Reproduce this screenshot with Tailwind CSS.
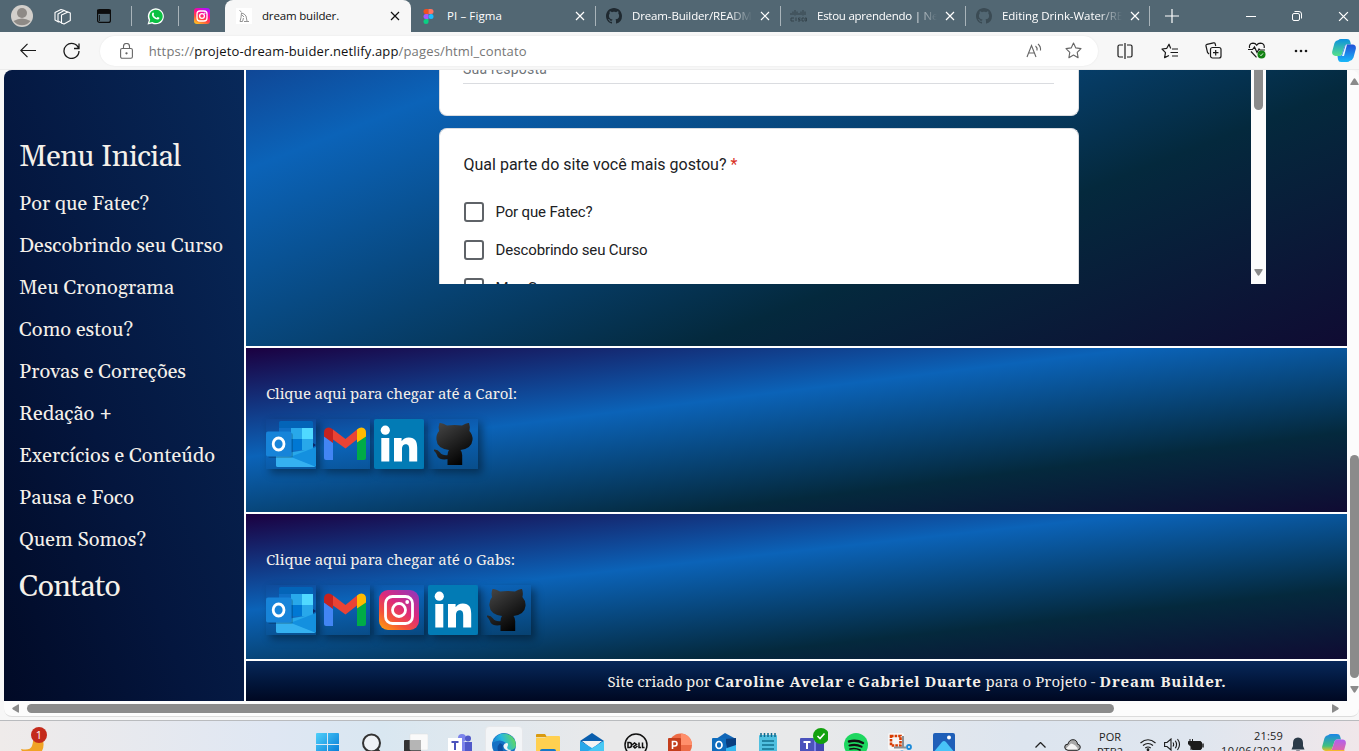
<!DOCTYPE html>
<html lang="pt-BR">
<head>
<meta charset="utf-8">
<title>dream builder.</title>
<script src="https://cdn.jsdelivr.net/npm/@tailwindcss/browser@4"></script>
</head>
<body class="w-[1359px] h-[751px] overflow-hidden flex flex-col bg-[#f7f7f7] font-['Open_Sans','Noto_Sans',sans-serif]">

<svg width="0" height="0" class="absolute">
  <defs>
    <linearGradient id="gIg" x1="0.1" y1="1" x2="0.8" y2="0"><stop offset="0" stop-color="#ff9a10"/><stop offset=".3" stop-color="#f4513a"/><stop offset=".6" stop-color="#dd2a7b"/><stop offset="1" stop-color="#9a35b5"/></linearGradient>
    <linearGradient id="gIg2" x1="0.2" y1="1" x2="0.7" y2="0"><stop offset="0" stop-color="#ffc020"/><stop offset=".35" stop-color="#ff4a40"/><stop offset=".65" stop-color="#ff0a90"/><stop offset="1" stop-color="#b010ff"/></linearGradient>
    <linearGradient id="gCat" gradientUnits="userSpaceOnUse" x1="10" y1="5" x2="36" y2="44"><stop offset="0" stop-color="#444"/><stop offset="1" stop-color="#000"/></linearGradient>
    <linearGradient id="gEdge" x1="0" y1=".6" x2="1" y2=".3"><stop offset="0" stop-color="#1479d0"/><stop offset=".45" stop-color="#28b8e0"/><stop offset="1" stop-color="#68dc50"/></linearGradient>
    <linearGradient id="gWin" x1="0" y1="0" x2="1" y2="1"><stop offset="0" stop-color="#4fd0fa"/><stop offset="1" stop-color="#0074d4"/></linearGradient>
    <linearGradient id="gCoA" x1="0" y1="0" x2="0" y2="1"><stop offset="0" stop-color="#0a90e0"/><stop offset="1" stop-color="#58e08a"/></linearGradient>
    <linearGradient id="gCoB" x1="0" y1="0" x2="0" y2="1"><stop offset="0" stop-color="#2050d8"/><stop offset="1" stop-color="#18b8f8"/></linearGradient>
    <linearGradient id="gCoC" x1="0" y1="0" x2="0" y2="1"><stop offset="0" stop-color="#1a86e8"/><stop offset=".7" stop-color="#40c080"/><stop offset="1" stop-color="#f0c020"/></linearGradient>
    <linearGradient id="gCoD" x1="0" y1="0" x2="0" y2="1"><stop offset="0" stop-color="#b060f0"/><stop offset="1" stop-color="#f86a80"/></linearGradient>
    <symbol id="mark" viewBox="0 0 16 16"><path d="M8 0C3.58 0 0 3.58 0 8c0 3.54 2.29 6.53 5.47 7.59.4.07.55-.17.55-.38 0-.19-.01-.82-.01-1.49-2.01.37-2.53-.49-2.69-.94-.09-.23-.48-.94-.82-1.13-.28-.15-.68-.52-.01-.53.63-.01 1.08.58 1.23.82.72 1.21 1.87.87 2.33.66.07-.52.28-.87.51-1.07-1.78-.2-3.64-.89-3.64-3.95 0-.87.31-1.59.82-2.15-.08-.2-.36-1.02.08-2.12 0 0 .67-.21 2.2.82.64-.18 1.32-.27 2-.27.68 0 1.36.09 2 .27 1.53-1.04 2.2-.82 2.2-.82.44 1.1.16 1.92.08 2.12.51.56.82 1.27.82 2.15 0 3.07-1.87 3.75-3.65 3.95.29.25.54.73.54 1.48 0 1.07-.01 1.93-.01 2.2 0 .21.15.46.55.38A8.013 8.013 0 0016 8c0-4.42-3.58-8-8-8z"/></symbol>
    <symbol id="x" viewBox="0 0 10 10"><path d="M1 1l8 8M9 1l-8 8" stroke="currentColor" stroke-width="1.2" fill="none"/></symbol>
    <symbol id="outlook" viewBox="0 0 50 50">
      <rect x="13" y="2" width="34" height="20" rx="1.5" fill="#0364b8"/><rect x="13" y="9" width="12" height="11" fill="#0f6fc6"/><rect x="25" y="9" width="11" height="11" fill="#28a8ea"/><rect x="36" y="9" width="11" height="11" fill="#50d9ff"/>
      <rect x="13" y="20" width="12" height="11" fill="#064a8c"/><rect x="25" y="20" width="11" height="11" fill="#0078d4"/><rect x="36" y="20" width="11" height="11" fill="#28a8ea"/>
      <rect x="25" y="31" width="13" height="9" fill="#0f6fc6"/><path d="M47 24l3 2-3 2z" fill="#0a2767"/>
      <path d="M10 36l40-7v17q0 2-2 2H12q-2 0-2-2z" fill="#28a8ea"/><path d="M24 38l26-10v17q0 2-1.500 3z" fill="#1490df"/><path d="M10 37l15 1 24 9.500-1 .5H12q-2 0-2-2z" fill="#35b1f0"/>
      <rect x="2" y="14" width="25" height="25" rx="2" fill="#000" opacity=".18"/><rect x="0" y="12.500" width="25.500" height="25" rx="2" fill="#1784d9"/>
      <ellipse cx="12.600" cy="25" rx="5.400" ry="6" fill="none" stroke="#fff" stroke-width="2.800"/>
    </symbol>
    <symbol id="gmail" viewBox="0 0 50 50">
      <path d="M4 17l9 6.500V41H6q-2 0-2-2z" fill="#4285f4"/><path d="M37 23.500L46 17v22q0 2-2 2h-7z" fill="#00ac47"/>
      <path d="M13 13.500v10.600L4 17.500v-4q0-4.500 4.500-5 2 0 4.500 2z" fill="#c5221f"/><path d="M13 10.500L25.500 20 37 10.500V20.500L25.500 29.500 13 20.500z" fill="#ea4335"/>
      <path d="M37 23.500V10.500q2-2 4.500-2Q46 9 46 13.500v4z" fill="#ffba00"/>
    </symbol>
    <symbol id="linkedin" viewBox="0 0 50 50"><rect width="50" height="50" rx="2" fill="#027bb5"/><circle cx="11.300" cy="11.200" r="4.600" fill="#fff"/><path d="M7.300 19h8v23.500h-8zM20 19h7.600v3.300c1.400-2.500 4-3.900 7.200-3.900 6.500 0 8.400 4.200 8.400 10.300v13.800h-8V30.400c0-3-.6-5.200-3.400-5.200s-3.800 2.200-3.800 5.200v12.100h-8z" fill="#fff"/></symbol>
    <symbol id="insta" viewBox="0 0 50 50"><rect x="5" y="5" width="40" height="40" rx="9" fill="url(#gIg)"/><rect x="11.500" y="11.500" width="27" height="27" rx="7" fill="none" stroke="#fff" stroke-width="2.800"/><circle cx="25" cy="25" r="6.500" fill="none" stroke="#fff" stroke-width="2.800"/><circle cx="33.200" cy="17" r="1.900" fill="#fff"/></symbol>
    <symbol id="cat" viewBox="0 0 50 50" fill="url(#gCat)"><path d="M11.500 4q3-.5 7.500 2.600 7.500-1.400 15 0Q38.500 3.500 41 4q1.500 4 .4 8 3.600 4 3.100 9-.8 8.500-12 10 1.700 2 1.700 5v10H19.500V36q0-3 1.500-5Q9 29.500 8.400 20.500q-.4-5 2.700-8.500-1.200-4 .4-8z"/><path d="M6 30.500q3.500-.5 6 3 2.500 3.500 8.500 2.500v4q-8.500 1.500-11-2.500Q8 33 6 32z"/></symbol>
  </defs>
</svg>

<!-- Tab strip -->
<header class="h-8 shrink-0 bg-[#526773] flex items-center text-[11.5px] text-white">
  <div class="w-11 flex justify-center"><svg width="22" height="22" viewBox="0 0 22 22"><circle cx="11" cy="11" r="11" fill="#d2cfcb"/><circle cx="11" cy="8" r="5" fill="#8e8a86"/><path d="M2.500 16q8.500-5 17 0A10.500 10.500 0 0 1 2.500 16z" fill="#8e8a86"/></svg></div>
  <div class="w-9 flex justify-center"><svg width="17" height="17" viewBox="0 0 17 17" fill="#526773" stroke="#fff" stroke-width="1.100" stroke-linejoin="round"><path d="M1 4.500l6-3 3.500 1v8l-6 3.500L1 12z"/><path d="M4 6l6-3.500 3.500 1.500v8L8 15l-4-2z"/><path d="M7.500 7L14 4l2.300 1v7.500L10 16l-2.500-1z"/></svg></div>
  <div class="w-[51px] pl-[17px]"><svg width="14" height="14" viewBox="0 0 14 14"><rect x=".6" y=".6" width="12.800" height="12.800" rx="2" fill="none" stroke="#0c0c0c" stroke-width="1.200"/><path d="M0 1h14v3.500H0zM2.500 6v6" fill="#0c0c0c" stroke="#0c0c0c" stroke-width=".8"/></svg></div>
  <div class="w-px h-5 bg-[#a9b4ba]"></div>
  <div class="w-[46px] flex justify-center"><svg width="17" height="17" viewBox="0 0 17 17"><path d="M.5 16.500l1.300-4.300A8 8 0 1 1 5 15.400z" fill="#fff"/><path d="M2.300 14.700l.9-3A6.700 6.700 0 1 1 5.400 14z" fill="#0cc143"/><path d="M5.800 4.500q.8-.3 1.300 1.300.1.500-.6 1.200Q7.500 9 9.700 9.900q.7-1 1-1 1.800.6 1.800 1-.2 1.700-2.200 1.700Q6 10.700 4.900 6.900q-.1-1.600.9-2.400z" fill="#fff"/></svg></div>
  <div class="w-px h-5 bg-[#a9b4ba]"></div>
  <div class="w-[46px] pl-[15px]"><svg width="16" height="16" viewBox="0 0 16 16"><rect width="16" height="16" rx="3" fill="url(#gIg2)"/><rect x="3" y="3" width="10" height="10" rx="3" fill="none" stroke="#fff" stroke-width="1.300"/><circle cx="8" cy="8" r="2.400" fill="none" stroke="#fff" stroke-width="1.300"/><circle cx="10.800" cy="5.200" r=".7" fill="#fff"/></svg></div>

  <div class="w-[186px] h-8 bg-[#f7f7f7] rounded-t-lg flex items-center text-[#111] pl-[11px]">
    <svg width="16" height="16" viewBox="0 0 16 16"><rect width="16" height="16" fill="#fff"/><path d="M3.500 2.500l2 1.500M5.500 5q3 .5 4.500 3l1 5M5.500 5L5 9.500 4 13.500h2.500L7.500 10M8 13.500h5M6 7l2 2" stroke="#888" stroke-width=".9" fill="none"/></svg>
    <span class="ml-[10px] whitespace-nowrap" data-fit="77">dream builder.</span>
    <svg width="10" height="10" class="ml-auto mr-[11px]"><use href="#x"/></svg>
  </div>
  <div class="w-[184px] h-8 flex items-center pl-3">
    <svg width="11" height="15" viewBox="0 0 10 15"><path d="M2.500 0H5v5H2.500a2.500 2.500 0 0 1 0-5z" fill="#f24e1e"/><path d="M5 0h2.500a2.500 2.500 0 0 1 0 5H5z" fill="#ff7262"/><path d="M2.500 5H5v5H2.500a2.500 2.500 0 0 1 0-5z" fill="#a259ff"/><circle cx="7.500" cy="7.500" r="2.500" fill="#1abcfe"/><path d="M2.500 10H5v2.500A2.500 2.500 0 1 1 2.500 10z" fill="#0acf83"/></svg>
    <span class="ml-[13px] whitespace-nowrap" data-fit="55">PI – Figma</span>
    <svg width="10" height="10" class="ml-auto mr-[10px]"><use href="#x"/></svg>
  </div>
  <div class="w-px h-5 bg-[#a9b4ba]"></div>
  <div class="w-[184px] h-8 flex items-center pl-[10px]">
    <svg width="16" height="16" fill="#1f2930"><use href="#mark"/></svg>
    <div class="ml-[10px] w-[120px] overflow-hidden whitespace-nowrap [mask-image:linear-gradient(to_right,black_80%,transparent)]"><span data-fit="126">Dream-Builder/README</span></div>
    <svg width="10" height="10" class="ml-auto mr-[10px]"><use href="#x"/></svg>
  </div>
  <div class="w-px h-5 bg-[#a9b4ba]"></div>
  <div class="w-[184px] h-8 flex items-center pl-[9px]">
    <svg width="17" height="14" viewBox="0 0 17 14" fill="none" stroke="#35444d" stroke-width="1"><path d="M1 4v2M3 2.500V6M5 1v5.500M7 2.500V6M9 4v2M11 2.500V6M13 1v5.500M15 2.500V6"/><path d="M4 9H1v3h3M6 8.500V12M10.500 9H8.500v1.500h1.500V12H8M14 9h-2v3h2M15 9h1.500v3H15z"/></svg>
    <div class="ml-[10px] w-[120px] overflow-hidden whitespace-nowrap [mask-image:linear-gradient(to_right,black_80%,transparent)]"><span data-fit="125">Estou aprendendo | Net</span></div>
    <svg width="10" height="10" class="ml-auto mr-[10px]"><use href="#x"/></svg>
  </div>
  <div class="w-px h-5 bg-[#a9b4ba]"></div>
  <div class="w-[183px] h-8 flex items-center pl-[10px]">
    <svg width="16" height="16" fill="#3b4b54"><use href="#mark"/></svg>
    <div class="ml-[10px] w-[120px] overflow-hidden whitespace-nowrap [mask-image:linear-gradient(to_right,black_80%,transparent)]"><span data-fit="121">Editing Drink-Water/RE</span></div>
    <svg width="10" height="10" class="ml-auto mr-[9px]"><use href="#x"/></svg>
  </div>
  <div class="w-px h-5 bg-[#a9b4ba]"></div>
  <svg class="ml-[15px]" width="14" height="14" viewBox="0 0 14 14"><path d="M7 0v14M0 7h14" stroke="#fff" stroke-width="1.200"/></svg>
  <div class="ml-auto w-[46px] flex justify-center"><div class="w-[10px] h-px bg-white"></div></div>
  <div class="w-[46px] flex justify-center"><svg width="10" height="10" viewBox="0 0 10 10" fill="none" stroke="#fff"><rect x=".5" y="2.500" width="7" height="7" rx="1.500"/><path d="M2.500.5H7q2.500 0 2.500 2.500v4.500"/></svg></div>
  <div class="w-[39px] pl-[18px]"><svg width="11" height="11"><use href="#x"/></svg></div>
</header>

<!-- Address bar -->
<div class="h-[38px] shrink-0 flex items-center border-b border-[#ececec] text-[#1a1a1a]">
  <div class="w-14 flex justify-center"><svg width="16" height="15" viewBox="0 0 16 15" fill="none" stroke="currentColor" stroke-width="1.200"><path d="M16 7.500H1M7.500.8L.8 7.500l6.700 6.700"/></svg></div>
  <div class="w-8 flex justify-center"><svg width="17" height="17" viewBox="0 0 17 17" fill="none" stroke="currentColor" stroke-width="1.300"><path d="M15.600 6.500A7.500 7.500 0 1 0 16 9M16 1.500v5h-5"/></svg></div>
  <div class="ml-3 w-[998px] shrink-0 h-[30px] bg-white rounded-full flex items-center pl-5 shadow-[0_0_2px_rgba(0,0,0,0.08)]">
    <svg width="13" height="16" viewBox="0 0 13 16" fill="none" stroke="#666" stroke-width="1.100"><rect x=".6" y="5.500" width="11.800" height="9.700" rx="1.500"/><path d="M3.500 5.500V3.500a3 3 0 0 1 6 0v2"/><circle cx="6.500" cy="10.300" r=".6" fill="#666"/></svg>
    <div class="ml-4 pt-[2px] text-[13px] text-[#767676] whitespace-nowrap" data-fit="378">https://<span class="text-[#111]">projeto-dream-buider.netlify.app</span>/pages/html_contato</div>
    <svg class="ml-auto" width="17" height="16" viewBox="0 0 17 16" fill="none" stroke="#666" stroke-width="1.100"><path d="M1 14L5.500 2.500 10 14M2.500 10h6M9.500 3q2 1.500 1.500 4.500M12 1q3 2.500 2.500 6.500"/></svg>
    <svg class="ml-[22px] mr-4" width="17" height="17" viewBox="0 0 17 17" fill="none" stroke="#666" stroke-width="1.100" stroke-linejoin="round"><path d="M8.500 1l2.300 4.900 5.200.7-3.800 3.700.9 5.400-4.600-2.600-4.600 2.600.9-5.400L1 6.600l5.200-.7z"/></svg>
  </div>
  <div class="ml-[5px] w-[45px] flex justify-center"><svg width="16" height="16" viewBox="0 0 16 16" fill="none" stroke="currentColor" stroke-width="1.200"><path d="M6 2H2.500Q1 2 1 3.500v9Q1 14 2.500 14H6M10 2h3.500Q15 2 15 3.500v9q0 1.500-1.500 1.500H10M8 0v16"/></svg></div>
  <div class="w-11 flex justify-center"><svg width="17" height="16" viewBox="0 0 17 16" fill="none" stroke="currentColor" stroke-width="1.200" stroke-linejoin="round"><path d="M9.700 5.500L8 1.200 5.800 5.300 1 6l3.500 3.600-.9 5L8 12.500M11 6h6M9.500 9.500H17M11 13h6"/></svg></div>
  <div class="w-11 flex justify-center"><svg width="17" height="17" viewBox="0 0 17 17" fill="none" stroke="currentColor" stroke-width="1.200"><path d="M4 12L2.500 10.500 1 4q-.3-1.300 1-1.700L8.500.8q1.300-.3 1.700 1L10.700 4"/><rect x="5.500" y="5.500" width="10.500" height="10.500" rx="2"/><path d="M10.700 8v5.500M8 10.700h5.500"/></svg></div>
  <div class="w-11 flex justify-center"><svg width="18" height="17" viewBox="0 0 18 17" fill="none" stroke="currentColor" stroke-width="1.200"><path d="M1.500 6Q.7 1.500 5 1.200q2.500 0 3.700 2 1.200-2 3.800-2Q17 1.500 16.200 6M3 9.500l5.500 5.800M0 7.500h4.500L6.500 5l2.500 5.500L11 7l1 1h5"/><circle cx="13.500" cy="12.500" r="4" fill="#128212" stroke="none"/><path d="M12 12.700l1 1 2-2.300" stroke="#fff" stroke-width=".9"/></svg></div>
  <div class="w-11 flex justify-center"><svg width="14" height="4" viewBox="0 0 14 4" fill="currentColor"><circle cx="2" cy="2" r="1.300"/><circle cx="7" cy="2" r="1.300"/><circle cx="12" cy="2" r="1.300"/></svg></div>
  <div class="w-9 shrink-0 pl-[9px]"><svg width="24" height="23" viewBox="0 0 24 23"><path d="M6.500 1Q7 0 9 0h6q2.500 0 3 2l1 3.500h-4q-2 0-2.500 2L10 15q-.7 2-2.500 2h-4Q-.5 16.500.2 12.500L2.500 4q.8-2.500 4-3z" fill="url(#gCoA)"/><path d="M17.500 22q-.5 1-2.500 1H9q-2.500 0-3-2.500L5.500 17h2Q9.500 17 10 15l2.500-7.500q.5-2 2.500-2h5.500q4 .5 3.300 4.500L21.500 18.500Q20.700 21 17.500 22z" fill="url(#gCoB)"/><path d="M10 17l3.500-10.500Q14 5.500 15 5.500l-3 11.500z" fill="#e8f6ff"/></svg></div>
</div>

<!-- Page -->
<div class="h-[631px] shrink-0 flex pl-1">
  <nav class="w-60 shrink-0 rounded-tl-lg pt-[61px] pl-[15px] text-[#f4f0ea] text-[20px] font-[Gelasio,'Liberation_Serif',serif] bg-[linear-gradient(70deg,#010a26_0%,#04163e_40%,#08295a_100%)]">
    <div class="h-[52px] flex items-center text-[30px]"><span class="whitespace-nowrap" data-fit="162">Menu Inicial</span></div>
    <div class="h-[42px] flex items-center"><span class="whitespace-nowrap" data-fit="130">Por que Fatec?</span></div>
    <div class="h-[42px] flex items-center"><span class="whitespace-nowrap" data-fit="204">Descobrindo seu Curso</span></div>
    <div class="h-[42px] flex items-center"><span class="whitespace-nowrap" data-fit="155">Meu Cronograma</span></div>
    <div class="h-[42px] flex items-center"><span class="whitespace-nowrap" data-fit="114">Como estou?</span></div>
    <div class="h-[42px] flex items-center"><span class="whitespace-nowrap" data-fit="167">Provas e Correções</span></div>
    <div class="h-[42px] flex items-center"><span class="whitespace-nowrap" data-fit="93">Redação +</span></div>
    <div class="h-[42px] flex items-center"><span class="whitespace-nowrap" data-fit="196">Exercícios e Conteúdo</span></div>
    <div class="h-[42px] flex items-center"><span class="whitespace-nowrap" data-fit="115">Pausa e Foco</span></div>
    <div class="h-[42px] flex items-center"><span class="whitespace-nowrap" data-fit="127">Quem Somos?</span></div>
    <div class="h-[52px] flex items-center text-[30px]"><span class="whitespace-nowrap" data-fit="101">Contato</span></div>
  </nav>

  <main class="w-[1103px] shrink-0 overflow-hidden border-l-2 border-white bg-white flex flex-col gap-[2px] text-[#f4f0ea] text-[15px] font-['Droid_Serif','Noto_Serif',Gelasio,'DejaVu_Serif_Condensed',serif]">
    <section class="w-[1342px] h-[276px] shrink-0 overflow-hidden flex flex-col justify-end">
      <div class="h-[528px] shrink-0 flex flex-col justify-end pb-[62px] bg-[linear-gradient(to_bottom_right,#1b0040,#0b63b8_33.3%,#04293d_66.6%,#14002f)]">
        <div class="h-[214px] shrink-0 pl-[193px] flex overflow-hidden font-[Roboto,sans-serif] text-[#202124]">
          <div class="w-[640px] flex flex-col">
            <div class="h-[46px] shrink-0 bg-white rounded-b-lg border-x border-b border-[#dadce0] px-[23px] flex flex-col overflow-hidden">
              <div class="h-[14px] shrink-0 border-b border-[#dadce0] w-[591px] flex items-end pb-[6px] leading-4 text-[14px] text-[#70757a]"><span class="whitespace-nowrap" data-fit="84">Sua resposta</span></div>
            </div>
            <div class="mt-3 h-[156px] bg-white rounded-t-lg border-x border-t border-[#dadce0] px-[23.5px] pt-6 overflow-hidden">
              <div class="h-6 leading-6 text-[16px]"><span data-fit="263">Qual parte do site você mais gostou?</span><span class="text-[#d93025] ml-1">*</span></div>
              <div class="mt-4 h-[38px] flex items-center"><div class="size-5 border-2 border-[#5f6368] rounded-[3px]"></div><span class="ml-3 text-[15px]" data-fit="97">Por que Fatec?</span></div>
              <div class="h-[38px] flex items-center"><div class="size-5 border-2 border-[#5f6368] rounded-[3px]"></div><span class="ml-3 text-[15px]" data-fit="152">Descobrindo seu Curso</span></div>
              <div class="h-[38px] flex items-center"><div class="size-5 border-2 border-[#5f6368] rounded-[3px]"></div><span class="ml-3 text-[15px]" data-fit="112">Meu Cronograma</span></div>
            </div>
          </div>
          <div class="ml-[172px] w-[15px] bg-[#fcfcfc] flex flex-col items-center">
            <div class="w-[9px] h-10 bg-[#8b8b8b] rounded-b-full"></div>
            <svg class="mt-auto mb-2" width="9" height="7" viewBox="0 0 9 7"><path d="M1 0h7q1 0 .6 1L5.500 6q-1 1.500-2 0L.4 1Q0 0 1 0z" fill="#8b8b8b"/></svg>
          </div>
        </div>
      </div>
    </section>

    <section class="w-[1342px] h-[164px] shrink-0 pl-5 pt-9 bg-[linear-gradient(to_bottom_right,#1b0040,#0b63b8_33.3%,#04293d_66.6%,#14002f)]">
      <p class="h-5 leading-[19px] whitespace-nowrap"><span data-fit="251">Clique aqui para chegar até a Carol:</span></p>
      <div class="mt-[15px] flex gap-1">
        <svg class="size-[50px] shadow-[4px_4px_8px_rgba(0,0,0,0.4)]"><use href="#outlook"/></svg>
        <svg class="size-[50px] shadow-[4px_4px_8px_rgba(0,0,0,0.4)]"><use href="#gmail"/></svg>
        <svg class="size-[50px] shadow-[4px_4px_8px_rgba(0,0,0,0.4)]"><use href="#linkedin"/></svg>
        <svg class="size-[50px] shadow-[4px_4px_8px_rgba(0,0,0,0.4)]"><use href="#cat"/></svg>
      </div>
    </section>

    <section class="w-[1342px] h-[145px] shrink-0 pl-5 pt-9 bg-[linear-gradient(to_bottom_right,#1b0040,#0b63b8_33.3%,#04293d_66.6%,#14002f)]">
      <p class="h-5 leading-[19px] whitespace-nowrap"><span data-fit="249">Clique aqui para chegar até o Gabs:</span></p>
      <div class="mt-[15px] flex gap-1">
        <svg class="size-[50px] shadow-[4px_4px_8px_rgba(0,0,0,0.4)]"><use href="#outlook"/></svg>
        <svg class="size-[50px] shadow-[4px_4px_8px_rgba(0,0,0,0.4)]"><use href="#gmail"/></svg>
        <svg class="size-[50px] shadow-[4px_4px_8px_rgba(0,0,0,0.4)]"><use href="#insta"/></svg>
        <svg class="size-[50px] shadow-[4px_4px_8px_rgba(0,0,0,0.4)]"><use href="#linkedin"/></svg>
        <svg class="-ml-px size-[50px] shadow-[4px_4px_8px_rgba(0,0,0,0.4)]"><use href="#cat"/></svg>
      </div>
    </section>

    <footer class="w-[1342px] h-10 shrink-0 flex items-center justify-center bg-linear-to-b from-[#08285a] to-[#000822]">
      <p class="whitespace-pre"><span data-fit="107">Site criado por </span><b data-fit="129">Caroline Avelar</b><span data-fit="15"> e </span><b data-fit="123">Gabriel Duarte</b><span data-fit="118"> para o Projeto - </span><b data-fit="127">Dream Builder.</b></p>
    </footer>
  </main>

  <div class="w-3 shrink-0 bg-[#fcfcfc] rounded-tr-lg flex flex-col items-end pt-2">
    <svg width="9" height="7" viewBox="0 0 9 7"><path d="M1 7h7q1 0 .6-1L5.500 1q-1-1.500-2 0L.4 6Q0 7 1 7z" fill="#8b8b8b"/></svg>
    <div class="mt-[370px] w-[9px] h-[223px] rounded-full bg-[#8b8b8b]"></div>
    <svg class="mt-2" width="9" height="7" viewBox="0 0 9 7"><path d="M1 0h7q1 0 .6 1L5.500 6q-1 1.500-2 0L.4 1Q0 0 1 0z" fill="#8b8b8b"/></svg>
  </div>
</div>

<div class="h-4 shrink-0 ml-1 pl-2 flex items-center bg-[#fcfcfc] border-b border-[#dcdcdc] rounded-b-lg">
  <svg width="7" height="9" viewBox="0 0 7 9"><path d="M7 1v7q0 1-1 .6L1 5.500q-1.500-1 0-2L6 .4Q7 0 7 1z" fill="#8b8b8b"/></svg>
  <div class="ml-2 w-[1087px] h-[9px] rounded-full bg-[#8b8b8b]"></div>
  <svg class="ml-auto mr-5" width="7" height="9" viewBox="0 0 7 9"><path d="M0 1v7q0 1 1 .6l5-3.100q1.500-1 0-2L1 .4Q0 0 0 1z" fill="#8b8b8b"/></svg>
</div>

<!-- Taskbar -->
<div class="mt-[3px] h-12 shrink-0 border-t border-[#b9bbbe] flex items-center bg-[linear-gradient(to_right,#efebea,#dfe7f3_20%,#d9e7f1_28%,#e9e9ea_45%,#e8e9ea_60%,#dde5ef_75%,#dfe6ef_88%,#f0e7ea)]">
  <div class="w-[305.5px] pl-[21px] pb-1"><svg width="27" height="32" viewBox="0 0 27 32"><path d="M0 22q9 2 11-3 1-3 1-5L22 13q2 8-3 14T4 28q-3-3-4-6z" fill="#f0a326"/><circle cx="18" cy="8" r="8" fill="#c42b1c"/><text x="18" y="12" font-size="11" fill="#fff" text-anchor="middle">1</text></svg></div>
  <div class="w-11 flex justify-center"><svg width="23" height="23" viewBox="0 0 23 23" fill="url(#gWin)"><path d="M1 0h10v11H0V1q0-1 1-1zM12 0h10q1 0 1 1v10H12zM0 12h11v11H0zM12 12h11v11H12z"/></svg></div>
  <div class="w-11 flex justify-center"><svg width="22" height="24" viewBox="0 0 22 24" fill="none" stroke="#333"><circle cx="10.500" cy="10" r="8.500" stroke-width="2" fill="#eef2f6"/><path d="M16 16l4.500 6" stroke-width="2.800"/></svg></div>
  <div class="w-11 flex justify-center"><svg width="24" height="24" viewBox="0 0 24 24"><rect y="7" width="17" height="16" rx="1" fill="#333"/><rect x="6" y="1" width="18" height="16" rx="1" fill="#fafafa" stroke="#ddd" stroke-width=".5"/><path d="M6 7h11v10H6z" fill="#b5b5b5"/></svg></div>
  <div class="w-11 flex justify-center"><svg width="26" height="24" viewBox="0 0 26 24"><circle cx="15" cy="5" r="4" fill="#7b83eb"/><circle cx="21" cy="5.500" r="3" fill="#5059c9"/><path d="M10 9h9v15h-9z" fill="#7b83eb"/><path d="M18 9h7v15h-7z" fill="#5059c9"/><rect x="1" y="5" width="14" height="19" fill="#fff"/><path d="M4.500 9h7M8 9v8" stroke="#4b53bc" stroke-width="2"/></svg></div>
  <div class="w-11 flex justify-center"><div class="w-[38px] h-[38px] rounded bg-[#f3f5f7] border border-[#e6e8eb] flex items-center justify-center"><svg width="24" height="24" viewBox="0 0 24 24"><circle cx="12" cy="12" r="12" fill="#1570c4"/><path d="M.3 10A12 12 0 0 1 24 12q-.5 5-6 5-4-.5-3.500-2.500Q16 12 14 10 8 5 .3 10z" fill="url(#gEdge)"/><path d="M11 12q-2 8 6 9.500Q12 24.500 8 21q-5-6 0-11z" fill="#0c4fa0"/><path d="M14 17q-3-2-2.500-4.500T14.500 10t1 3.500 4 3.500q-2 2-5.500 0z" fill="#f3f5f7"/></svg></div></div>
  <div class="w-11 flex justify-center"><svg width="24" height="24" viewBox="0 0 24 24"><path d="M0 2q0-1 1-1h8l2 3H0z" fill="#d99a10"/><path d="M0 4.500h9L11.500 3H23q1 0 1 1v20H0z" fill="#ffd050"/><path d="M4 18q0-2 2-2h12q2 0 2 2v6H4z" fill="#1478c8"/></svg></div>
  <div class="w-11 flex justify-center"><svg width="24" height="24" viewBox="0 0 24 24"><path d="M0 8L12 0l12 8-12 8z" fill="#0a5ead"/><path d="M2 8h20L12 16z" fill="#f3f3f3"/><path d="M0 8l12 7 12-7v16H0z" fill="#28a8ea"/><path d="M24 8L8 18l10 6h6z" fill="#48c8f4"/></svg></div>
  <div class="w-11 flex justify-center"><svg width="24" height="24" viewBox="0 0 24 24" fill="none" stroke="#111" stroke-width="1.500"><circle cx="12" cy="12" r="11"/><path d="M4 9.500v5h1.500q2 0 2-2.500t-2-2.500zM8 12l2.500-2 2 1.500-3 2L11 15l2.500-2M15 9.500v5h2M18.500 9.500v5h2"/></svg></div>
  <div class="w-11 flex justify-center"><svg width="24" height="24" viewBox="0 0 24 24"><circle cx="12.500" cy="12" r="11.500" fill="#ed6c47"/><path d="M13 .5A11.500 11.500 0 0 1 24 12H13z" fill="#ff8f6b"/><rect y="5" width="13" height="14" rx="1" fill="#c43e1c"/><path d="M4.500 16V8.500h2.300q2.200 0 2.200 2.200T6.800 13H4.500" stroke="#fff" stroke-width="1.600" fill="none"/></svg></div>
  <div class="w-11 flex justify-center"><svg width="24" height="24" viewBox="0 0 24 24"><path d="M4 6l9-6 11 6v18H4z" fill="#1066b8"/><path d="M13 6l11-1v9l-8 4z" fill="#0a3f80"/><path d="M6 18l18-6v12H6z" fill="#35b8f0"/><rect y="5" width="14" height="14" rx="1" fill="#0f6cbd"/><ellipse cx="7" cy="12" rx="3" ry="3.500" stroke="#fff" stroke-width="1.700" fill="none"/></svg></div>
  <div class="w-11 flex justify-center"><svg width="18" height="24" viewBox="0 0 18 24"><rect y="2" width="18" height="22" rx="1" fill="#50c0e0"/><path d="M2 0v4M5.500 0v4M9 0v4M12.500 0v4M16 0v4" stroke="#10688c" stroke-width="1.500"/><path d="M3 8h12M3 12h12M3 16h12" stroke="#12708f" stroke-width="1.500"/></svg></div>
  <div class="w-11 flex justify-center"><svg width="32" height="34" viewBox="0 0 32 34"><path d="M9 12h19v17H9z" fill="#7b83eb"/><path d="M20 14h8v15h-8z" fill="#4048b0"/><rect x="4" y="10" width="14" height="16" rx="1" fill="#4b53bc"/><path d="M7.500 14h7M11 14v7" stroke="#fff" stroke-width="2"/><path d="M8 23h18v5H8z" fill="#38c8f0"/><circle cx="25" cy="8" r="8" fill="#13a10e"/><path d="M21.500 8l2.500 2.500 4.500-5" stroke="#fff" stroke-width="1.600" fill="none"/></svg></div>
  <div class="w-11 flex justify-center"><svg width="24" height="24" viewBox="0 0 24 24" fill="none" stroke="#111" stroke-linecap="round"><circle cx="12" cy="12" r="12" fill="#1ed760" stroke="none"/><path d="M5 8.500q7.500-2 14 1.500" stroke-width="2.500"/><path d="M5.500 12.500q6.500-1.800 12 1.200" stroke-width="2.100"/><path d="M6 16q5.500-1.400 10 1" stroke-width="1.700"/></svg></div>
  <div class="w-11 flex justify-center"><svg width="24" height="24" viewBox="0 0 24 24"><rect width="16" height="17" rx="2" fill="#f6f6f6"/><rect x="3" y="3" width="9.500" height="9.500" fill="none" stroke="#d83b01" stroke-width="2.600" stroke-dasharray="2.600 1"/><path d="M15 3v12M6 14.500h12" stroke="#8a8f94" stroke-width="2"/><circle cx="21" cy="14" r="2" fill="none" stroke="#1b8ad8" stroke-width="1.800"/><circle cx="14" cy="21" r="2.500" fill="none" stroke="#1b8ad8" stroke-width="1.800"/></svg></div>
  <div class="w-11 flex justify-center"><svg width="22" height="24" viewBox="0 0 22 24"><rect width="22" height="24" rx="2" fill="#1f5fb8"/><path d="M0 20L9 9q2-2 4 0l9 11v4H0z" fill="#48c4f8"/><circle cx="16" cy="4.500" r="2" fill="#fff"/></svg></div>

  <div class="ml-auto w-8 flex justify-center"><svg width="11" height="6" viewBox="0 0 11 6"><path d="M.5 5.500l5-5 5 5" stroke="#222" stroke-width="1.300" fill="none"/></svg></div>
  <div class="w-8 flex justify-center"><svg width="17" height="12" viewBox="0 0 17 12"><path d="M4 11.300Q.7 11 .7 8T4 5.200Q5 .7 9 .7t4.500 4.500q2.800.3 2.800 3t-3 3.100z" fill="#a8a8a8" stroke="#222"/><path d="M2 9.500l5-5q5 1 7 6H4z" fill="#f4f4f4"/></svg></div>
  <div class="w-11 pb-[2px] text-center text-[11px] leading-[15px] text-[#1c1c1c]"><div>POR</div><div>PTB2</div></div>
  <div class="ml-1 w-6 flex justify-center"><svg width="16" height="12" viewBox="0 0 16 12" fill="none" stroke="#1c1c1c" stroke-width="1.200"><path d="M.5 4q7.500-6.500 15 0M3 6.500q5-4 10 0M5.300 9q2.700-2 5.400 0"/><circle cx="8" cy="10.700" r=".8" fill="#1c1c1c"/></svg></div>
  <div class="w-6 flex justify-center"><svg width="17" height="13" viewBox="0 0 17 13" fill="none" stroke="#1c1c1c" stroke-width="1.100"><path d="M.6 4.500H3L7 1v11L3 8.500H.6zM9 4.500q1.300 2 0 4M11.300 2.800q2.500 3.700 0 7.400M13.500 1q4 5.500 0 11"/></svg></div>
  <div class="w-6 flex justify-center"><svg width="16" height="13" viewBox="0 0 16 13"><rect x="3.500" y="3.500" width="10" height="8" rx="1.500" fill="#1c1c1c" stroke="#1c1c1c"/><path d="M15 5.500v4" stroke="#1c1c1c" stroke-width="1.500"/><path d="M.5 3.500h5v2.500l-2 2H2.500l-2-2zM2 1v2M4.500 1v2M3 8v4" fill="#1c1c1c" stroke="#1c1c1c"/></svg></div>
  <div class="w-[75px] pb-[3px] flex flex-col items-end text-[11px] leading-[15px] text-[#1c1c1c] whitespace-nowrap"><span data-fit="29">21:59</span><span data-fit="62">10/06/2024</span></div>
  <div class="ml-2 w-[14px]"><svg width="14" height="16" viewBox="0 0 14 16"><path d="M7 .5q5 .3 5 5.500v3l1.500 3.500H.5L2 9V6Q2 .8 7 .5zM5 13.500h4q-2 2.500-4 0z" fill="#2b3a48"/></svg></div>
  <div class="w-[54px] pl-1 flex justify-center"><svg width="24" height="22" viewBox="0 0 24 22"><path d="M6.500 1Q7 0 9 0h6q2.500 0 3 2l1 3.500h-4q-2 0-2.500 2L10 15q-.7 2-2.500 2h-4Q-.5 16.500.2 12.500L2.500 4q.8-2.500 4-3z" fill="url(#gCoC)"/><path d="M17.500 22H9q-2.500 0-3-2.500L5.500 17h2Q9.500 17 10 15l2.500-7.500q.5-2 2.500-2h5.500q4 .5 3.300 4.500L21.500 18.500z" fill="url(#gCoD)"/><rect x="5" y="16" width="18" height="6" rx="2" fill="#f5b82e"/></svg></div>
</div>

<script>
  /* Tracks each label out to its intended advance width. */
  function fitLabels() {
    for (const el of document.querySelectorAll('[data-fit]')) {
      el.style.letterSpacing = '0px';
      const range = document.createRange();
      range.selectNodeContents(el);
      const natural = range.getBoundingClientRect().width;
      el.style.letterSpacing = ((+el.dataset.fit - natural) / el.textContent.length) + 'px';
    }
  }
  window.addEventListener('load', fitLabels);
  document.fonts.ready.then(fitLabels);
</script>
</body>
</html>
